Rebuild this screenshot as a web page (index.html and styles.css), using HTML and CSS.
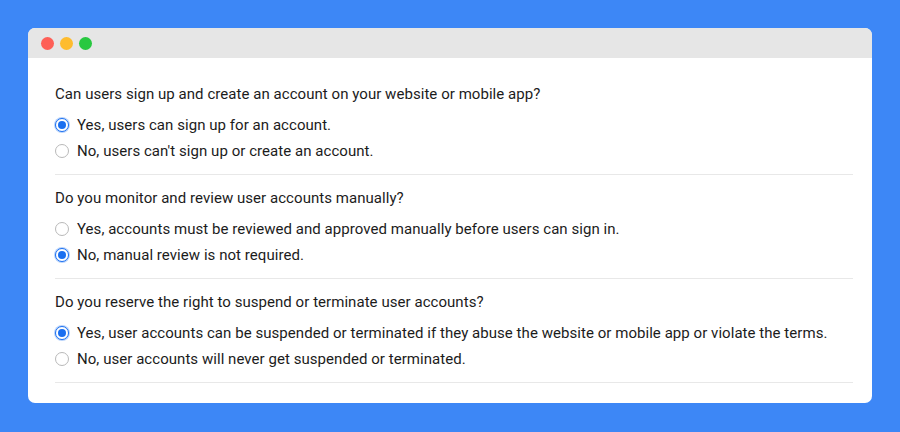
FILE: index.html
```html
<!DOCTYPE html>
<html>
<head>
<meta charset="utf-8">
<link rel="stylesheet" href="styles.css">
</head>
<body>
<div class="window">
  <div class="titlebar">
    <span class="dot red"></span>
    <span class="dot yellow"></span>
    <span class="dot green"></span>
  </div>
  <div class="content">
    <div class="section">
      <div class="question">Can users sign up and create an account on your website or mobile app?</div>
      <div class="options">
        <div class="option"><span class="radio checked"></span>Yes, users can sign up for an account.</div>
        <div class="option"><span class="radio"></span>No, users can't sign up or create an account.</div>
      </div>
    </div>
    <div class="section">
      <div class="question">Do you monitor and review user accounts manually?</div>
      <div class="options">
        <div class="option"><span class="radio"></span>Yes, accounts must be reviewed and approved manually before users can sign in.</div>
        <div class="option"><span class="radio checked"></span>No, manual review is not required.</div>
      </div>
    </div>
    <div class="section">
      <div class="question">Do you reserve the right to suspend or terminate user accounts?</div>
      <div class="options">
        <div class="option"><span class="radio checked"></span>Yes, user accounts can be suspended or terminated if they abuse the website or mobile app or violate the terms.</div>
        <div class="option"><span class="radio"></span>No, user accounts will never get suspended or terminated.</div>
      </div>
    </div>
  </div>
</div>
</body>
</html>
```
FILE: styles.css
```css
html, body {
  margin: 0;
  padding: 0;
}
body {
  background: #3d87f6;
  width: 900px;
  height: 432px;
  padding: 28px;
  box-sizing: border-box;
  font-family: Roboto, "Liberation Sans", sans-serif;
  color: #1c1c1c;
}
.window {
  width: 844px;
  height: 375px;
  background: #ffffff;
  border-radius: 7px;
  overflow: hidden;
}
.titlebar {
  height: 30px;
  background: #e6e6e6;
  display: flex;
  align-items: center;
  padding-left: 13px;
  gap: 6px;
}
.dot {
  width: 13px;
  height: 13px;
  border-radius: 50%;
  display: inline-block;
}
.red { background: #fe5f57; }
.yellow { background: #febc2e; }
.green { background: #28c840; }
.content {
  padding: 13px 19px 0 27px;
}
.section {
  padding: 13px 0 13px;
  border-bottom: 1px solid #e8e8e8;
}
.question {
  font-size: 15px;
  line-height: 20px;
  letter-spacing: 0.05px;
  margin-bottom: 11px;
}
.options {
  display: flex;
  flex-direction: column;
  gap: 6px;
}
.option {
  display: flex;
  align-items: center;
  font-size: 15px;
  line-height: 20px;
  letter-spacing: 0.05px;
}
.radio {
  width: 14px;
  height: 14px;
  box-sizing: border-box;
  border: 1px solid #b9b9b9;
  border-radius: 50%;
  margin-right: 8px;
  position: relative;
  flex: none;
  background: #fff;
}
.radio.checked {
  border: 1px solid #1a6ff0;
  box-shadow: 0 0 0 1px #b8d3fb;
}
.radio.checked::after {
  content: "";
  position: absolute;
  left: 2px;
  top: 2px;
  width: 8px;
  height: 8px;
  border-radius: 50%;
  background: #1a6ff0;
}
```
